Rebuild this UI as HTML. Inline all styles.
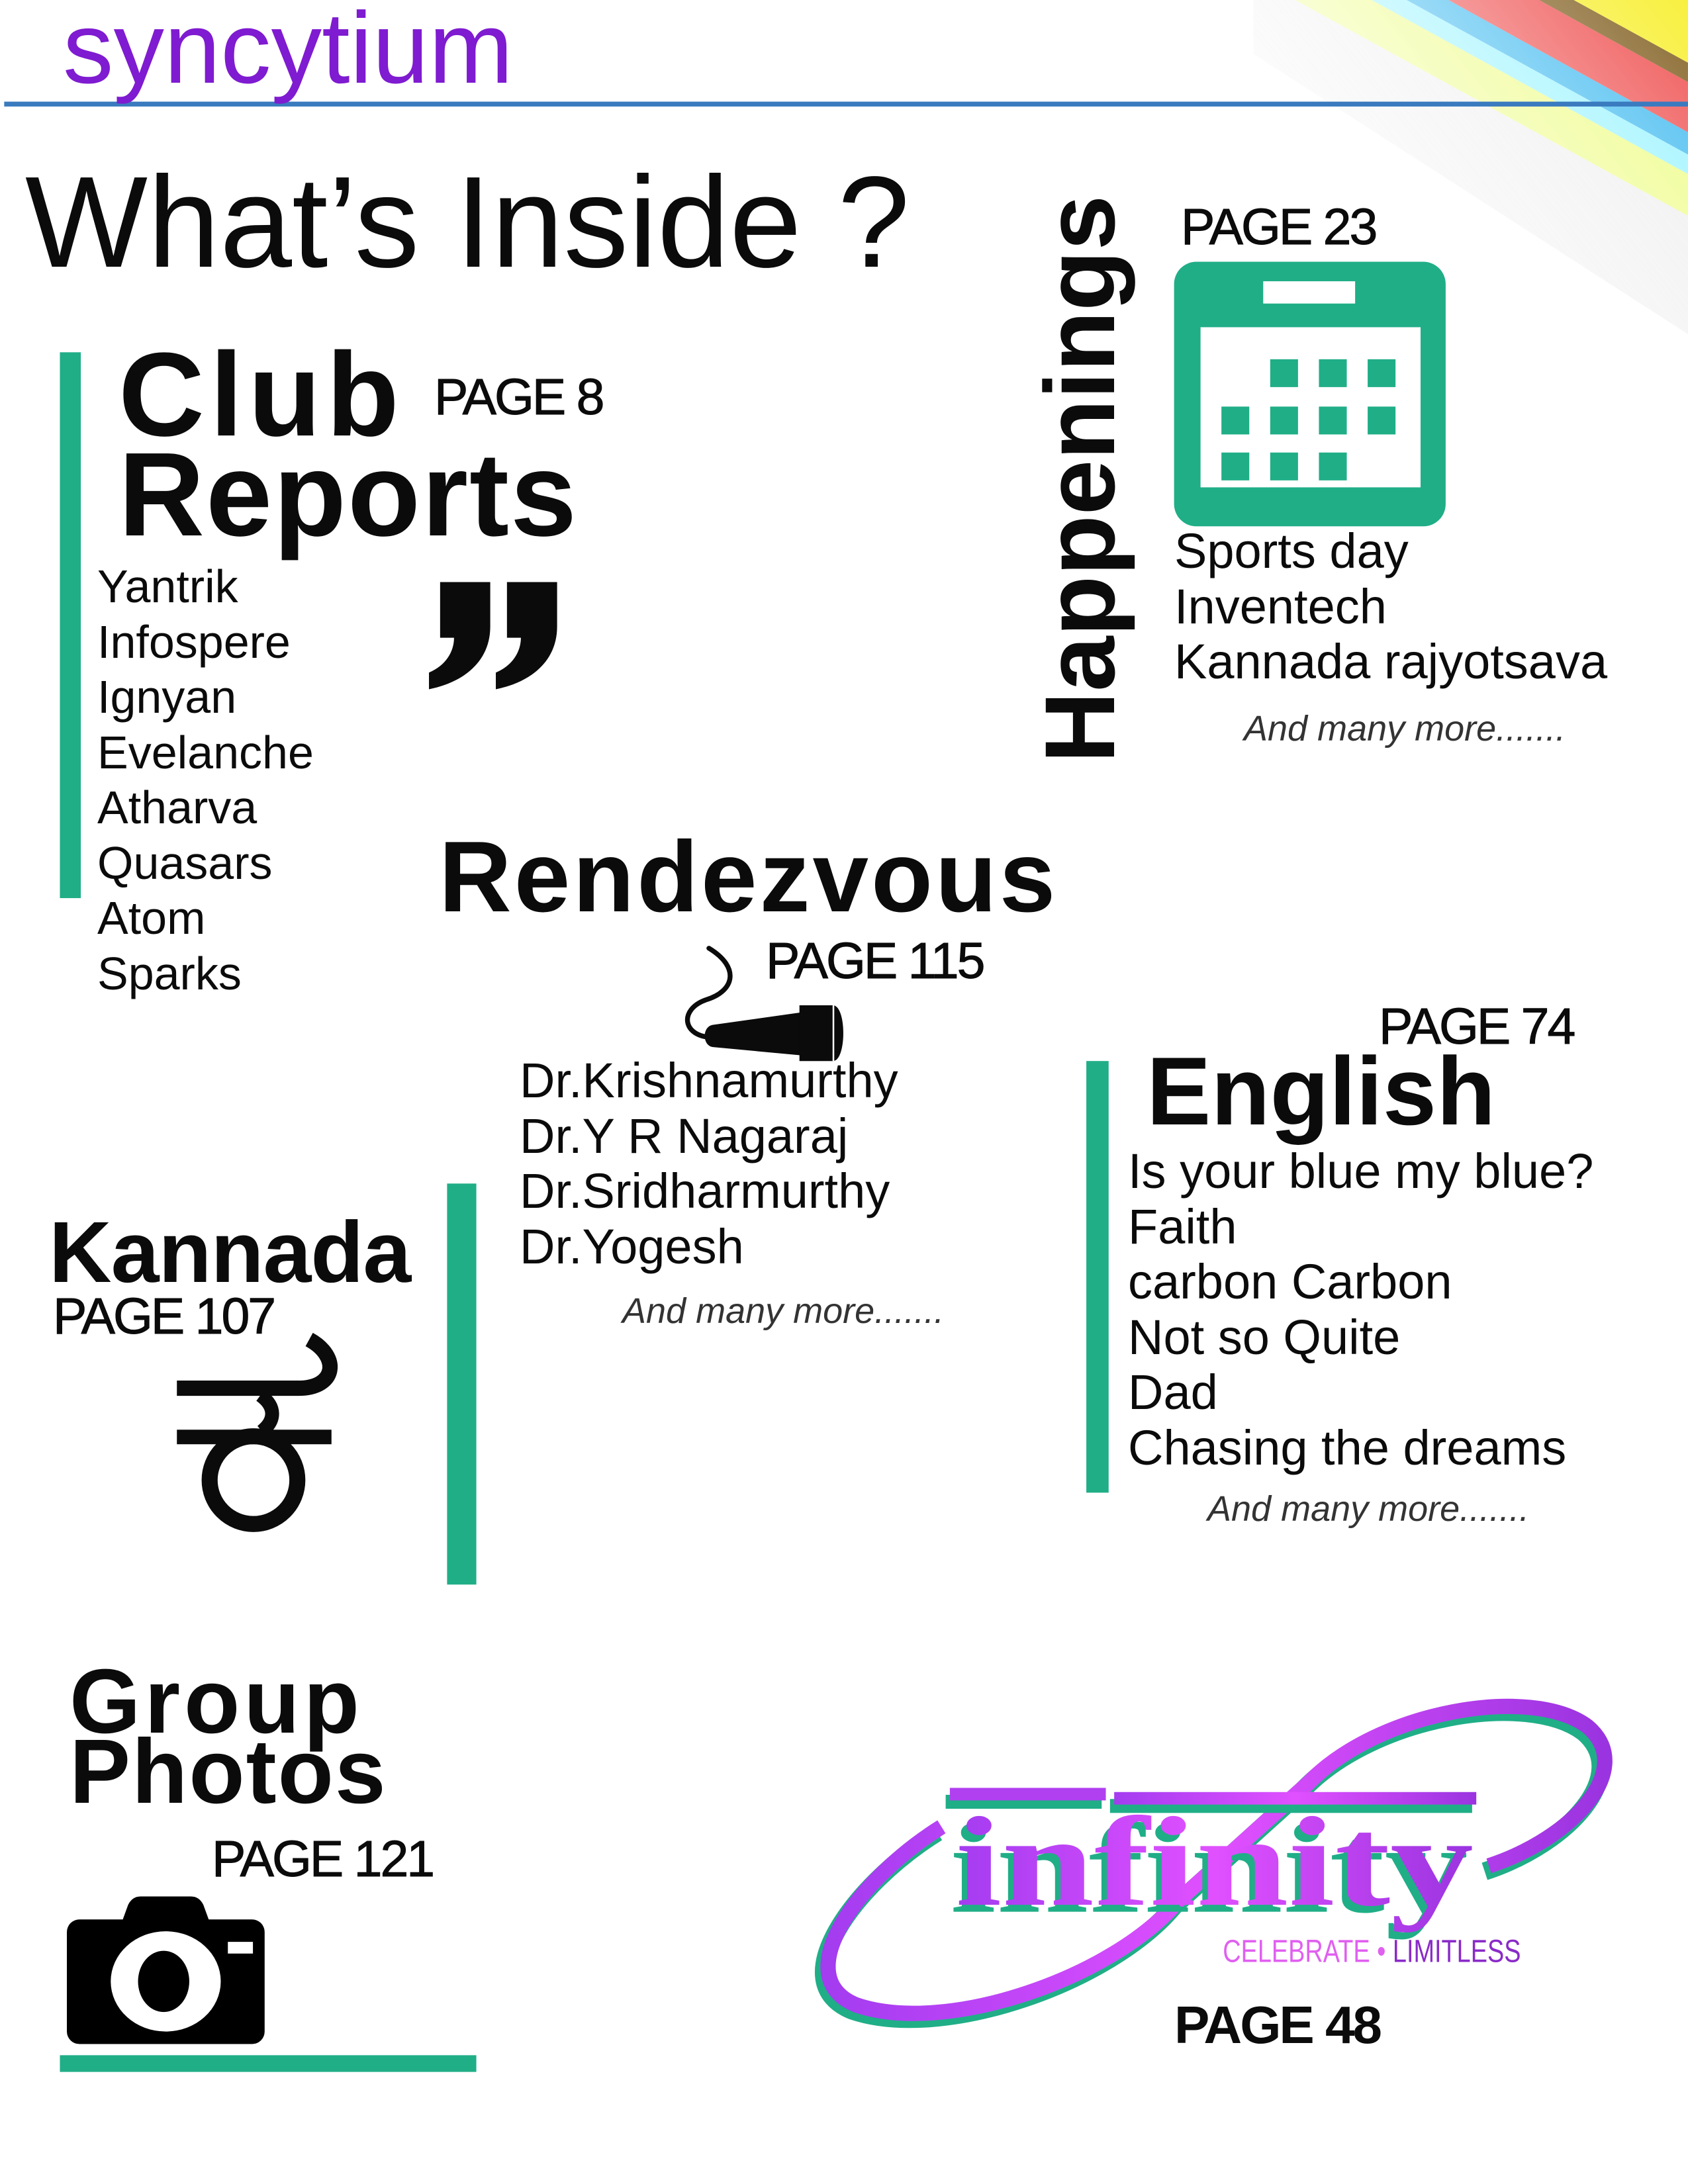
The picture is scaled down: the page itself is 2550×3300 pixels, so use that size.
<!DOCTYPE html>
<html><head><meta charset="utf-8">
<style>
html,body{margin:0;padding:0;background:#fff;}
body{width:2550px;height:3300px;position:relative;overflow:hidden;font-family:"Liberation Sans",sans-serif;color:#0b0b0b;}
.t{position:absolute;line-height:1;white-space:nowrap;}
.h{font-weight:bold;}
.pg{font-size:77px;letter-spacing:-3px;-webkit-text-stroke:1px #0b0b0b;}
.l{position:absolute;font-size:74px;line-height:83.5px;white-space:nowrap;}
.m{position:absolute;font-size:54px;line-height:1;font-style:italic;color:#333;white-space:nowrap;}
svg{position:absolute;left:0;top:0;}
</style></head><body>
<svg width="2550" height="3300" viewBox="0 0 1212 1568.5">
<defs>
<linearGradient id="fade" x1="0.1" y1="0.7" x2="1" y2="0">
<stop offset="0" stop-color="#fff" stop-opacity="0"/>
<stop offset="0.5" stop-color="#fff" stop-opacity="0.5"/>
<stop offset="1" stop-color="#fff" stop-opacity="1"/>
</linearGradient>
<mask id="mk"><rect x="900" y="0" width="312" height="300" fill="url(#fade)"/></mask>
<linearGradient id="pur" x1="0" y1="0" x2="1" y2="0">
<stop offset="0" stop-color="#a43cf0"/><stop offset="0.5" stop-color="#e050ff"/><stop offset="1" stop-color="#9a34e0"/>
</linearGradient>
</defs>
<g mask="url(#mk)">
<polygon points="840,0 930,0 1212,155 1212,240 " fill="#dcdcdc" opacity="0.45"/>
<polygon points="930,0 985,0 1212,125 1212,155" fill="#eefc8a"/>
<polygon points="985,0 1010,0 1212,111 1212,125" fill="#9ff4ff"/>
<polygon points="1010,0 1040,0 1212,95 1212,111" fill="#49bdf0"/>
<polygon points="1040,0 1105,0 1212,59 1212,95" fill="#f05a5a"/>
<polygon points="1105,0 1130,0 1212,45 1212,59" fill="#8a6a30"/>
<polygon points="1130,0 1212,0 1212,45" fill="#f8f040"/>
</g>
<rect x="3" y="73" width="1209" height="3.5" fill="#3a7bbf"/>
<rect x="43" y="253" width="15" height="392" fill="#20ae87"/>
<rect x="321" y="850" width="21" height="288" fill="#20ae87"/>
<rect x="780" y="762" width="16" height="310" fill="#20ae87"/>
<rect x="43" y="1476" width="299" height="12" fill="#20ae87"/>
<path d="M316 418 L352 418 L352 450 C352 475 333 490 308 495 L308 483 C320 478 326 468 326 458 L316 458 Z" fill="#0b0b0b"/>
<path d="M364 418 L400 418 L400 450 C400 475 381 490 356 495 L356 483 C368 478 374 468 374 458 L364 458 Z" fill="#0b0b0b"/>
<rect x="843" y="188" width="195" height="190" rx="16" fill="#20ae87"/>
<rect x="862" y="235" width="158" height="115" fill="#fff"/>
<rect x="907" y="202" width="66" height="16" fill="#fff"/>
<g fill="#20ae87">
<rect x="912" y="258" width="20" height="20"/><rect x="947" y="258" width="20" height="20"/><rect x="982" y="258" width="20" height="20"/>
<rect x="877" y="292" width="20" height="20"/><rect x="912" y="292" width="20" height="20"/><rect x="947" y="292" width="20" height="20"/><rect x="982" y="292" width="20" height="20"/>
<rect x="877" y="325" width="20" height="20"/><rect x="912" y="325" width="20" height="20"/><rect x="947" y="325" width="20" height="20"/>
</g>
<path d="M509 681 C532 695 527 712 507 718 C487 725 490 745 512 745" fill="none" stroke="#0b0b0b" stroke-width="3.5" stroke-linecap="round"/>
<path d="M512 736 L576 727 L576 758 L512 752 C504 751 504 737 512 736 Z" fill="#0b0b0b"/>
<path d="M574 722 L598 722 C608 722 608 762 598 762 L574 762 Z" fill="#0b0b0b"/>
<rect x="597.8" y="722" width="1.2" height="40" fill="#fff"/>
<g fill="none" stroke="#0b0b0b">
<path d="M222 962 C244 974 242 997 214 997 L127 997" stroke-width="11"/>
<path d="M187 1002 C198 1010 198 1020 188 1028" stroke-width="10"/>
<line x1="127" y1="1032" x2="238" y2="1032" stroke-width="10.5"/>
<circle cx="182" cy="1063" r="31.5" stroke-width="11.5"/>
</g>
<!-- camera -->
<path d="M88 1379 L92 1368 C94 1364 97 1362 101 1362 L137 1362 C141 1362 144 1364 146 1368 L150 1379 Z" fill="#000"/>
<rect x="48" y="1378.5" width="142" height="89.5" rx="9" fill="#000"/>
<ellipse cx="119" cy="1423" rx="39.5" ry="36" fill="#fff"/>
<ellipse cx="117.5" cy="1423" rx="18.4" ry="22" fill="#000"/>
<rect x="163.6" y="1394.6" width="18" height="8.4" fill="#fff"/>
<!-- infinity logo -->
<g transform="translate(-3,4)">
<path d="M676 1312 C615 1350 565 1420 615 1440 C680 1462 800 1420 846 1365 L939 1281 C990 1228 1100 1210 1140 1240 C1175 1270 1130 1320 1069 1340" fill="none" stroke="#20ae87" stroke-width="13"/>
</g>
<path d="M676 1312 C615 1350 565 1420 615 1440 C680 1462 800 1420 846 1365 L939 1281 C990 1228 1100 1210 1140 1240 C1175 1270 1130 1320 1069 1340" fill="none" stroke="url(#pur)" stroke-width="11"/>
<rect x="679" y="1289" width="112" height="10" fill="#20ae87"/>
<rect x="682" y="1284" width="112" height="9" fill="#b040f0"/>
<rect x="797" y="1292" width="260" height="10" fill="#20ae87"/>
<rect x="800" y="1287" width="260" height="9" fill="url(#pur)"/>
<text x="682" y="1373" font-family="Liberation Serif" font-weight="bold" font-size="92" textLength="372" lengthAdjust="spacingAndGlyphs" fill="#20ae87">infinity</text>
<text x="686" y="1368" font-family="Liberation Serif" font-weight="bold" font-size="92" textLength="372" lengthAdjust="spacingAndGlyphs" fill="url(#pur)">infinity</text>
<text x="878" y="1409" font-family="Liberation Sans" font-size="23" textLength="214" lengthAdjust="spacingAndGlyphs"><tspan fill="#e060f0">CELEBRATE • </tspan><tspan fill="#8a2bc8">LIMITLESS</tspan></text>
</svg>

<div class="t" style="left:95px;top:-4px;font-size:153px;color:#7f1bd0;">syncytium</div>
<div class="t" style="left:38px;top:238px;font-size:196px;font-weight:300;">What’s Inside ?</div>

<div class="t h" style="left:179px;top:507px;font-size:180px;letter-spacing:8px;">Club</div>
<div class="t h" style="left:179px;top:658px;font-size:180px;letter-spacing:2px;">Reports</div>
<div class="t pg" style="left:656px;top:562px;">PAGE 8</div>
<div class="l" style="left:147px;top:845px;line-height:83.5px;font-size:70px;">Yantrik<br>Infospere<br>Ignyan<br>Evelanche<br>Atharva<br>Quasars<br>Atom<br>Sparks</div>

<div class="t h" style="left:1181px;top:649px;width:900px;height:150px;text-align:center;font-size:150px;transform:rotate(-90deg);">Happenings</div>
<div class="t pg" style="left:1784px;top:305px;">PAGE 23</div>
<div class="l" style="left:1774px;top:791px;">Sports day<br>Inventech<br>Kannada rajyotsava</div>
<div class="m" style="left:1879px;top:1074px;">And many more.......</div>

<div class="t h" style="left:663px;top:1249px;font-size:152px;letter-spacing:4px;">Rendezvous</div>
<div class="t pg" style="left:1157px;top:1414px;">PAGE 115</div>
<div class="l" style="left:785px;top:1591px;">Dr.Krishnamurthy<br>Dr.Y R Nagaraj<br>Dr.Sridharmurthy<br>Dr.Yogesh</div>
<div class="m" style="left:940px;top:1954px;">And many more.......</div>

<div class="t h" style="left:74px;top:1826px;font-size:131px;letter-spacing:-1px;">Kannada</div>
<div class="t pg" style="left:80px;top:1951px;">PAGE 107</div>

<div class="t pg" style="left:2083px;top:1513px;">PAGE 74</div>
<div class="t h" style="left:1732px;top:1576px;font-size:146px;">English</div>
<div class="l" style="left:1704px;top:1728px;">Is your blue my blue?<br>Faith<br>carbon Carbon<br>Not so Quite<br>Dad<br>Chasing the dreams</div>
<div class="m" style="left:1824px;top:2253px;">And many more.......</div>

<div class="t h" style="left:105px;top:2502px;font-size:138px;letter-spacing:6px;">Group</div>
<div class="t h" style="left:105px;top:2608px;font-size:138px;letter-spacing:2px;">Photos</div>
<div class="t pg" style="left:320px;top:2771px;">PAGE 121</div>
<div class="t" style="left:1774px;top:3020px;font-size:80px;font-weight:bold;letter-spacing:-3px;">PAGE 48</div>
</body></html>
